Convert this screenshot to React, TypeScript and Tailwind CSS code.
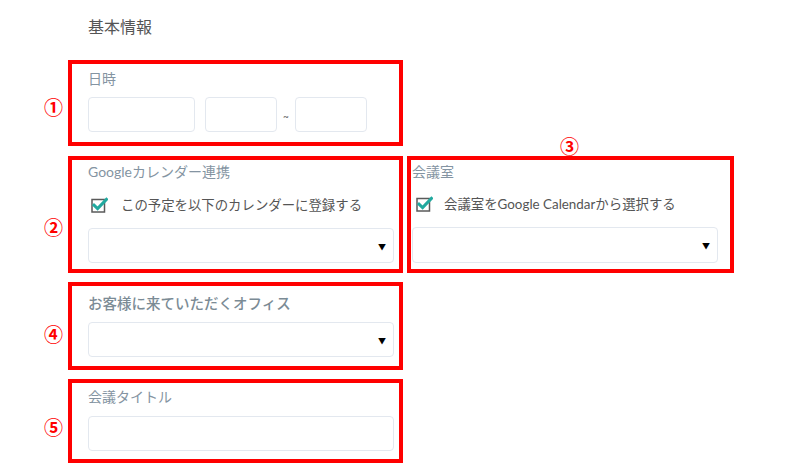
import React from "react";

const FONT = "font-['Lato','Noto_Sans_CJK_JP',sans-serif]";
const NUM = "font-['Noto_Sans_CJK_JP',sans-serif] text-[19px] leading-[20px] font-bold text-[#ff0000]";

function Check() {
  return (
    <svg width="17" height="16" viewBox="0 0 17 16" className="shrink-0">
      <rect x="1" y="2.5" width="12.5" height="12.5" fill="white" stroke="#5a5a5a" strokeWidth="1.5" />
      <path d="M3 8.2 L6.6 11.6 L15.4 2.4" fill="none" stroke="#21a99f" strokeWidth="3" strokeLinecap="square" />
    </svg>
  );
}

function Arrow() {
  return <span className="text-[8px] text-black leading-none pt-[2px]">▼</span>;
}

export default function App() {
  return (
    <div className={`w-[800px] h-[470px] bg-white ${FONT} text-[#555] overflow-hidden`}>
      <div className="pl-[88px] pt-[15px] h-[60px] text-[16px] leading-[24px] text-[#555]">基本情報</div>

      {/* Row 1 */}
      <div className="flex">
        <div className="w-[68px] shrink-0 pl-[44px] pt-[37px]">
          <span className={NUM}>①</span>
        </div>
        <div className="w-[335px] h-[86px] border-4 border-[#ff0000] pl-[16px] pt-[5px]">
          <div className="text-[14px] leading-[20px] text-[#8494a2]">日時</div>
          <div className="mt-[8px] flex items-center">
            <div className="w-[107px] h-[35px] border border-[#e3e8ef] rounded-[4px]" />
            <div className="ml-[10px] w-[72px] h-[35px] border border-[#e3e8ef] rounded-[4px]" />
            <div className="w-[18px] text-center text-[10px] text-[#555] pt-[4px]">~</div>
            <div className="w-[72px] h-[35px] border border-[#e3e8ef] rounded-[4px]" />
          </div>
        </div>
      </div>

      {/* Row 2 */}
      <div className="mt-[10px] flex">
        <div className="w-[68px] shrink-0 pl-[44px] pt-[61px]">
          <span className={NUM}>②</span>
        </div>
        <div className="w-[335px] h-[117px] border-4 border-[#ff0000] pl-[16px] pt-[2px]">
          <div className="text-[14px] leading-[20px] text-[#8494a2]">Googleカレンダー連携</div>
          <div className="mt-[13px] h-[20px] flex items-center pl-[3px] gap-[13px]">
            <Check />
            <span className="text-[13.4px] text-[#555]">この予定を以下のカレンダーに登録する</span>
          </div>
          <div className="mt-[13px] w-[306px] h-[35px] border border-[#e3e8ef] rounded-[4px] flex items-center justify-end pr-[7px]">
            <Arrow />
          </div>
        </div>
        <div className="relative ml-[4px] w-[327px] h-[117px] border-4 border-[#ff0000] pl-[1px] pt-[2px]">
          <span className={`absolute left-[149px] -top-[24px] ${NUM}`}>③</span>
          <div className="text-[14px] leading-[20px] text-[#8494a2]">会議室</div>
          <div className="mt-[12px] h-[20px] flex items-center pl-[4px] gap-[11px]">
            <Check />
            <span className="text-[13.4px] text-[#555]">会議室をGoogle Calendarから選択する</span>
          </div>
          <div className="mt-[13px] w-[306px] h-[36px] border border-[#e3e8ef] rounded-[4px] flex items-center justify-end pr-[7px]">
            <Arrow />
          </div>
        </div>
      </div>

      {/* Row 4 */}
      <div className="mt-[9px] flex">
        <div className="w-[68px] shrink-0 pl-[44px] pt-[42px]">
          <span className={NUM}>④</span>
        </div>
        <div className="w-[335px] h-[88px] border-4 border-[#ff0000] pl-[16px] pt-[8px]">
          <div className="text-[14.5px] leading-[20px] text-[#7b8b95] font-medium">お客様に来ていただくオフィス</div>
          <div className="mt-[8px] w-[306px] h-[35px] border border-[#e3e8ef] rounded-[4px] flex items-center justify-end pr-[7px]">
            <Arrow />
          </div>
        </div>
      </div>

      {/* Row 5 */}
      <div className="mt-[9px] flex">
        <div className="w-[68px] shrink-0 pl-[44px] pt-[38px]">
          <span className={NUM}>⑤</span>
        </div>
        <div className="w-[335px] h-[84px] border-4 border-[#ff0000] pl-[16px] pt-[4px]">
          <div className="text-[14px] leading-[20px] text-[#8494a2]">会議タイトル</div>
          <div className="mt-[9px] w-[306px] h-[35px] border border-[#e3e8ef] rounded-[4px]" />
        </div>
      </div>
    </div>
  );
}
